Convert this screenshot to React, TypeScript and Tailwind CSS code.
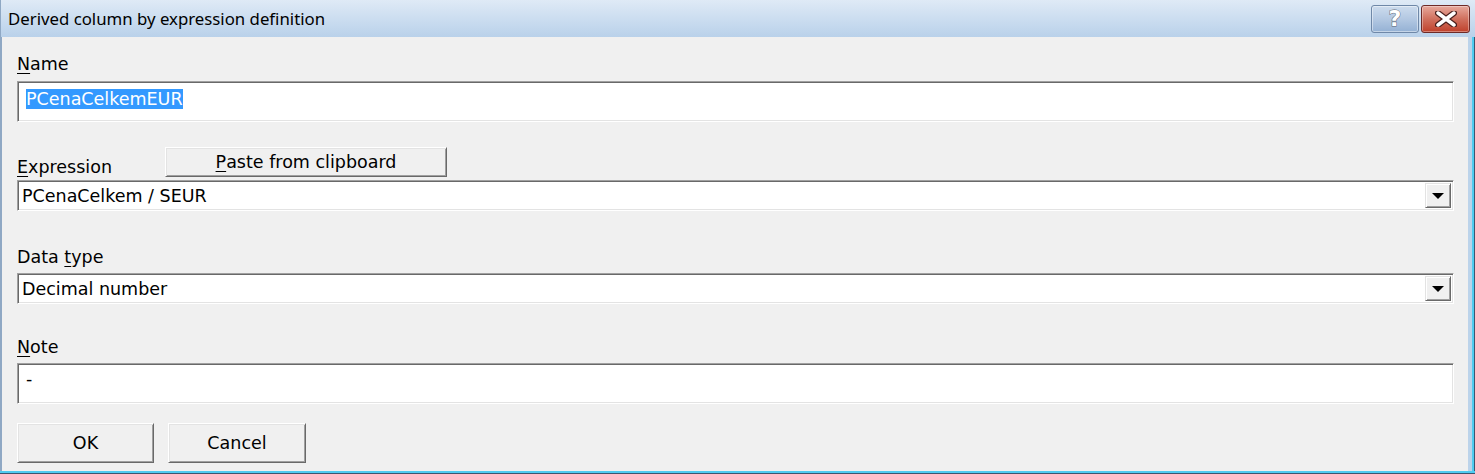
import React from "react"

const label = "font-['DejaVu_Sans',sans-serif] text-[17.5px] leading-[20px] text-black"
const mn = "underline underline-offset-[3px] decoration-1"

function Sunken({ className, children }: { className: string; children?: React.ReactNode }) {
  return (
    <div
      className={`border border-t-[#a0a0a0] border-l-[#a0a0a0] border-b-white border-r-white bg-white shadow-[inset_1px_1px_0_#696969,inset_-1px_-1px_0_#e3e3e3] ${className}`}
    >
      {children}
    </div>
  )
}

function Combo({ value }: { value: string }) {
  return (
    <Sunken className="h-[31px] w-[1437px] flex items-stretch p-[2px]">
      <div className={`${label} flex-1 flex items-center pl-[2px]`}>{value}</div>
      <div className="w-[26px] bg-[#f0f0f0] border border-t-[#e3e3e3] border-l-[#e3e3e3] border-b-[#696969] border-r-[#696969] shadow-[inset_1px_1px_0_#ffffff,inset_-1px_-1px_0_#a0a0a0] flex items-center justify-center">
        <svg width="12" height="6" viewBox="0 0 12 6">
          <path d="M0 0h12L6 6z" fill="#000" />
        </svg>
      </div>
    </Sunken>
  )
}

function Btn({ className, children }: { className: string; children: React.ReactNode }) {
  return (
    <button
      className={`${label} bg-[#f0f0f0] border border-t-white border-l-white border-b-[#696969] border-r-[#696969] shadow-[inset_1px_1px_0_#e3e3e3,inset_-1px_-1px_0_#a0a0a0] flex items-center justify-center ${className}`}
    >
      {children}
    </button>
  )
}

export default function App() {
  return (
    <div className="w-[1475px] h-[474px] flex flex-col bg-[#bcd3ea] overflow-hidden">
      <header className="h-[37px] shrink-0 flex items-start justify-between bg-gradient-to-b from-[#dfeaf6] to-[#b9d1ea] border-l border-[#8fa8c4]">
        <div className="pl-[7px] pt-[9px] font-['Noto_Sans',sans-serif] text-[16.8px] leading-[20px] text-black">
          Derived column by expression definition
        </div>
        <div className="flex gap-[2px] pt-[5px] pr-[5px]">
          <div className="w-[48px] h-[28px] rounded-[3px] border border-[#6f88a8] bg-gradient-to-b from-[#cddcee] via-[#b3c8e2] to-[#94b1d4] shadow-[inset_0_0_0_1px_rgba(255,255,255,0.45)] flex items-center justify-center">
            <span className="font-['DejaVu_Sans',sans-serif] font-bold text-[22px] leading-[24px] text-white [-webkit-text-stroke:1px_#5a6472] [paint-order:stroke_fill]">
              ?
            </span>
          </div>
          <div className="w-[49px] h-[28px] rounded-[3px] border border-[#6e2a27] bg-gradient-to-b from-[#e7a99d] via-[#d0705e] to-[#bf3f2a] shadow-[inset_0_0_0_1px_rgba(255,255,255,0.35)] flex items-center justify-center">
            <svg width="22" height="16" viewBox="0 0 22 16">
              <path
                d="M3 2 L19 14 M19 2 L3 14"
                stroke="#4a1f1c"
                strokeWidth="6"
                strokeLinecap="round"
              />
              <path d="M3 2 L19 14 M19 2 L3 14" stroke="#ffffff" strokeWidth="3.5" strokeLinecap="round" />
            </svg>
          </div>
        </div>
      </header>

      <div className="flex-1 flex border-l-[2px] border-[#8fa8c4]">
        <main className="w-[1466px] h-[434px] bg-[#f0f0f0] pl-[15px] pt-[17px] flex flex-col">
          <div className={label}>
            <span className={mn}>N</span>ame
          </div>
          <Sunken className="mt-[7px] h-[41px] w-[1437px] p-[2px]">
            <div className="pl-[6px] pt-[3px]">
              <span className={`${label} inline-block bg-[#3399ff] text-white`}>PCenaCelkemEUR</span>
            </div>
          </Sunken>

          <div className="mt-[25px] h-[30px] flex items-end">
            <div className={`${label} w-[148px]`}>
              <span className={mn}>E</span>xpression
            </div>
            <Btn className="w-[282px] h-[30px]">
              <span className={mn}>P</span>aste from clipboard
            </Btn>
          </div>
          <div className="mt-[3px]">
            <Combo value="PCenaCelkem / SEUR" />
          </div>

          <div className={`${label} mt-[36px]`}>
            Data <span className={mn}>t</span>ype
          </div>
          <div className="mt-[6px]">
            <Combo value="Decimal number" />
          </div>

          <div className={`${label} mt-[33px]`}>
            <span className={mn}>N</span>ote
          </div>
          <Sunken className="mt-[6px] h-[41px] w-[1437px] p-[2px]">
            <div className={`${label} pl-[6px] pt-[3px]`}>-</div>
          </Sunken>

          <div className="mt-[19px] flex gap-[14px]">
            <Btn className="w-[137px] h-[40px]">OK</Btn>
            <Btn className="w-[138px] h-[40px]">Cancel</Btn>
          </div>
        </main>
        <div className="flex-1 flex">
          <div className="w-[4px] bg-[#bcd3ea]" />
          <div className="w-[2px] bg-[#4fcbf0]" />
          <div className="flex-1 bg-[#3b5670]" />
        </div>
      </div>
      <div className="h-[3px] shrink-0 bg-[#4fcbf0] border-b border-[#3b5670]" />
    </div>
  )
}
